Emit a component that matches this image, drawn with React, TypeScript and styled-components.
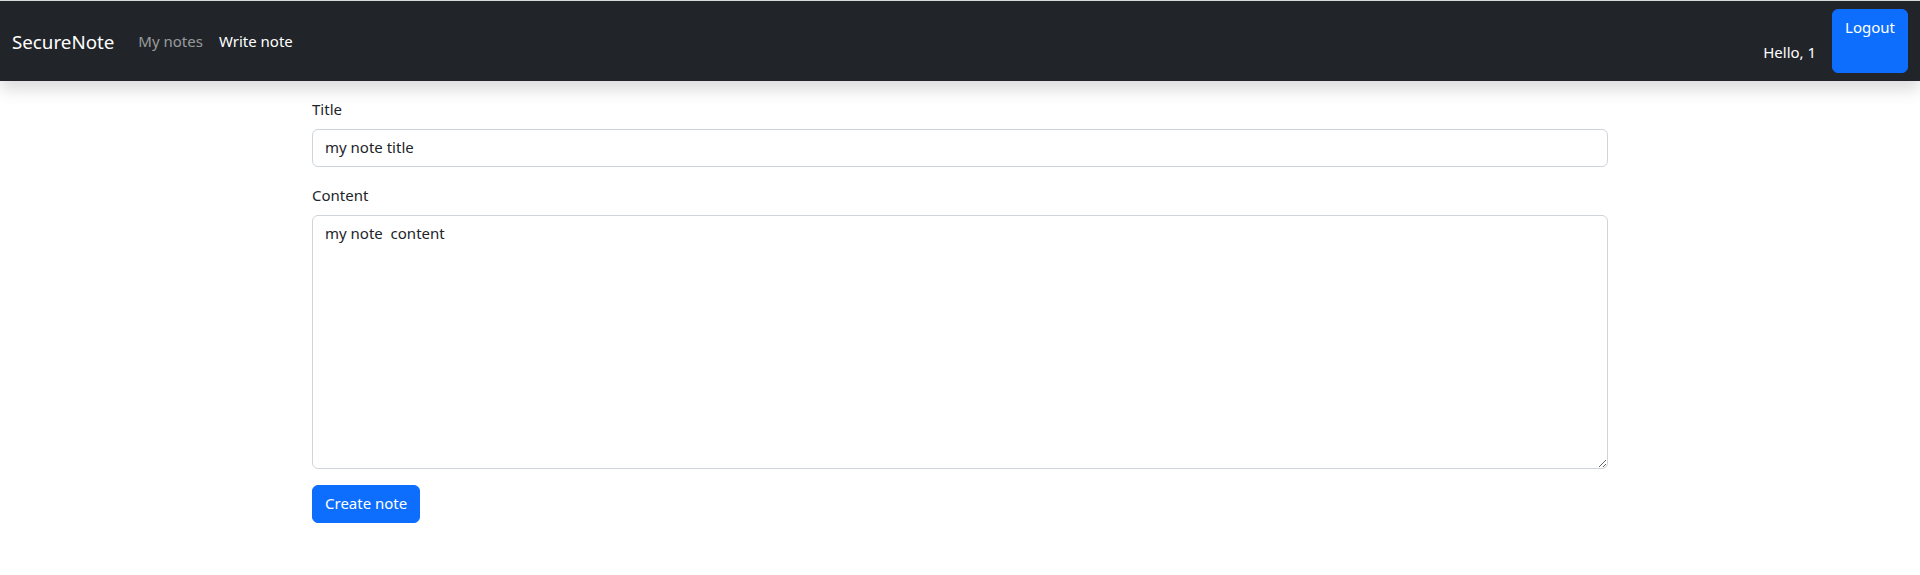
import React from "react";
import styled, { createGlobalStyle } from "styled-components";

const GlobalStyle = createGlobalStyle`
  * { box-sizing: border-box; }
  body {
    margin: 0;
    background: #fff;
    color: #212529;
    font-family: "Noto Sans", "Open Sans", sans-serif;
    font-size: 15px;
    line-height: 24px;
  }
`;

const Navbar = styled.nav`
  border-top: 1px solid #dadada;
  background: #212529;
  height: 81px;
  padding: 8px 12px;
  display: flex;
  align-items: stretch;
  box-shadow: 0 8px 16px rgba(0, 0, 0, 0.15);
  position: relative;
`;

const Brand = styled.a`
  color: #fff;
  font-size: 18.75px;
  line-height: 30px;
  align-self: center;
  margin-right: 16px;
  margin-top: 1px;
  text-decoration: none;
`;

const NavList = styled.ul`
  list-style: none;
  margin: 0;
  padding: 0;
  display: flex;
  align-items: center;
  flex: 1;
`;

const NavLink = styled.a<{ $active?: boolean }>`
  display: block;
  padding: 8px;
  color: ${(p) => (p.$active ? "#fff" : "rgba(255,255,255,0.55)")};
  text-decoration: none;
`;

const UserArea = styled.div`
  display: flex;
  align-items: stretch;
`;

const Greeting = styled.span`
  align-self: flex-end;
  color: #fff;
  padding: 7px 0 9px;
  margin-right: 16px;
`;

const Button = styled.button`
  font-family: inherit;
  font-size: 15px;
  line-height: 24px;
  color: #fff;
  background: #0d6efd;
  border: 1px solid #0d6efd;
  border-radius: 6px;
  padding: 5px 12px 7px;
  cursor: pointer;
`;

const LogoutButton = styled(Button)`
  display: flex;
  align-items: flex-start;
`;

const Container = styled.main`
  width: 1320px;
  margin: 0 auto;
  padding: 16px 12px 0;
`;

const Field = styled.div`
  margin-bottom: 16px;
`;

const Label = styled.label`
  display: block;
  margin-bottom: 8px;
`;

const inputStyles = `
  display: block;
  width: 100%;
  font-family: inherit;
  font-size: 15px;
  line-height: 24px;
  color: #212529;
  background: #fff;
  border: 1px solid #ced4da;
  border-radius: 6px;
  padding: 5px 12px 7px;
  outline: none;
`;

const TextInput = styled.input`
  ${inputStyles}
`;

const TextArea = styled.textarea`
  ${inputStyles}
  height: 254px;
  resize: vertical;
`;

export default function App() {
  return (
    <>
      <GlobalStyle />
      <Navbar>
        <Brand href="#">SecureNote</Brand>
        <NavList>
          <li>
            <NavLink href="#">My notes</NavLink>
          </li>
          <li>
            <NavLink href="#" $active>
              Write note
            </NavLink>
          </li>
        </NavList>
        <UserArea>
          <Greeting>Hello, 1</Greeting>
          <LogoutButton type="button">Logout</LogoutButton>
        </UserArea>
      </Navbar>
      <Container>
        <form onSubmit={(e) => e.preventDefault()}>
          <Field>
            <Label htmlFor="title">Title</Label>
            <TextInput id="title" defaultValue="my note title" />
          </Field>
          <Field>
            <Label htmlFor="content">Content</Label>
            <TextArea id="content" rows={10} defaultValue="my note  content" />
          </Field>
          <Button type="submit">Create note</Button>
        </form>
      </Container>
    </>
  );
}
